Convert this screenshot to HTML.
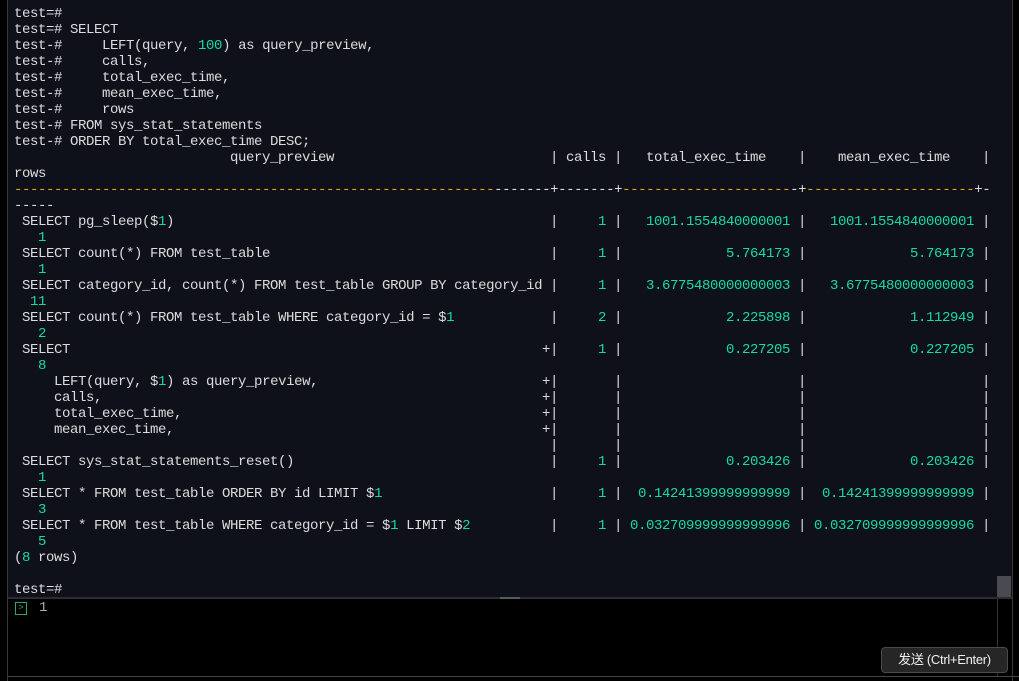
<!DOCTYPE html>
<html><head><meta charset="utf-8">
<style>
html,body{margin:0;padding:0;background:#000;width:1019px;height:681px;overflow:hidden}
#term{position:absolute;left:8px;top:0;width:1004px;height:597px;background:#0e111a}
#lb{position:absolute;left:7px;top:0;width:1px;height:681px;background:#3a3a3a}
#rb{position:absolute;left:1012px;top:0;width:1px;height:681px;background:#3a3a3a}
.l{position:absolute;left:0;height:16px;line-height:16px;font-family:"Liberation Mono",monospace;font-size:14px;letter-spacing:-0.4px;color:#dcdcdc;white-space:pre;width:1000px}
.l span{position:absolute;top:0}
.q{left:22px}
.g{color:#1ad9a3}
.p1{left:550px}.p2{left:614px}.p3{left:798px}.p4{left:982px}
.pl{left:542px}
.ca{left:566px;width:40px;text-align:right;color:#1ad9a3}
.ta{left:630px;width:160px;text-align:right;color:#1ad9a3}
.ma{left:814px;width:160px;text-align:right;color:#1ad9a3}
.o{color:#e8a317}
</style></head><body>
<div id="term"></div>
<div id="lb"></div><div id="rb"></div>
<div style="position:absolute;left:997px;top:576px;width:14px;height:21px;background:#4a4b52"></div>
<div style="position:absolute;left:8px;top:597px;width:1004px;height:2px;background:#2a2d33"></div>
<div style="position:absolute;left:500px;top:597px;width:20px;height:2px;background:#5a5a5a"></div>
<div style="position:absolute;left:997px;top:599px;width:1px;height:77px;background:#333"></div>
<div style="position:absolute;left:8px;top:676px;width:1011px;height:1px;background:#444"></div>
<div style="position:absolute;left:15px;top:602px;width:10px;height:11px;border:1px solid #2ea36b;color:#2ea36b;font:9px 'Liberation Mono',monospace;line-height:11px;text-align:center">&gt;</div>
<div style="position:absolute;left:39px;top:600px;height:16px;line-height:16px;font:14px 'Liberation Mono',monospace;color:#aaa">1</div>
<div style="position:absolute;left:881px;top:647px;width:125px;height:24px;background:#262626;border:1px solid #4a4a4a;border-radius:4px;color:#f0f0f0;font:13px 'Liberation Sans','Noto Sans CJK SC',sans-serif;letter-spacing:-0.3px;line-height:24px;text-align:center">发送 (Ctrl+Enter)</div>

<div style="position:absolute;left:6px;top:2px">
<div class="l" style="top:4px"><span style="left:8px">test=#</span></div>
<div class="l" style="top:20px"><span style="left:8px">test=# SELECT</span></div>
<div class="l" style="top:36px"><span style="left:8px">test-#     LEFT(query, <span class="g" style="position:static">100</span>) as query_preview,</span></div>
<div class="l" style="top:52px"><span style="left:8px">test-#     calls,</span></div>
<div class="l" style="top:68px"><span style="left:8px">test-#     total_exec_time,</span></div>
<div class="l" style="top:84px"><span style="left:8px">test-#     mean_exec_time,</span></div>
<div class="l" style="top:100px"><span style="left:8px">test-#     rows</span></div>
<div class="l" style="top:116px"><span style="left:8px">test-# FROM sys_stat_statements</span></div>
<div class="l" style="top:132px"><span style="left:8px">test-# ORDER BY total_exec_time DESC;</span></div>
</div>

<div style="position:absolute;left:0;top:2px">
<div class="l" style="top:148px"><span style="left:230px">query_preview</span><span class="p1">|</span><span style="left:566px">calls</span><span class="p2">|</span><span style="left:646px">total_exec_time</span><span class="p3">|</span><span style="left:838px">mean_exec_time</span><span class="p4">|</span></div>
<div class="l" style="top:164px"><span style="left:14px">rows</span></div>
<div class="l" style="top:180px"><span style="left:14px"><span class="o" style="position:static">------------------------------------------------------------</span>-------+-------+<span class="o" style="position:static">---------------------</span>-+<span class="o" style="position:static">---------------------</span>+-</span></div>
<div class="l" style="top:196px"><span style="left:14px">-----</span></div>

<div class="l" style="top:212px"><span class="q">SELECT pg_sleep($<span class="g" style="position:static">1</span>)</span><span class="p1">|</span><span class="ca">1</span><span class="p2">|</span><span class="ta">1001.1554840000001</span><span class="p3">|</span><span class="ma">1001.1554840000001</span><span class="p4">|</span></div>
<div class="l" style="top:228px"><span class="g" style="left:38px">1</span></div>

<div class="l" style="top:244px"><span class="q">SELECT count(*) FROM test_table</span><span class="p1">|</span><span class="ca">1</span><span class="p2">|</span><span class="ta">5.764173</span><span class="p3">|</span><span class="ma">5.764173</span><span class="p4">|</span></div>
<div class="l" style="top:260px"><span class="g" style="left:38px">1</span></div>

<div class="l" style="top:276px"><span class="q">SELECT category_id, count(*) FROM test_table GROUP BY category_id</span><span class="p1">|</span><span class="ca">1</span><span class="p2">|</span><span class="ta">3.6775480000000003</span><span class="p3">|</span><span class="ma">3.6775480000000003</span><span class="p4">|</span></div>
<div class="l" style="top:292px"><span class="g" style="left:30px">11</span></div>

<div class="l" style="top:308px"><span class="q">SELECT count(*) FROM test_table WHERE category_id = $<span class="g" style="position:static">1</span></span><span class="p1">|</span><span class="ca">2</span><span class="p2">|</span><span class="ta">2.225898</span><span class="p3">|</span><span class="ma">1.112949</span><span class="p4">|</span></div>
<div class="l" style="top:324px"><span class="g" style="left:38px">2</span></div>

<div class="l" style="top:340px"><span class="q">SELECT</span><span class="pl">+</span><span class="p1">|</span><span class="ca">1</span><span class="p2">|</span><span class="ta">0.227205</span><span class="p3">|</span><span class="ma">0.227205</span><span class="p4">|</span></div>
<div class="l" style="top:356px"><span class="g" style="left:38px">8</span></div>
<div class="l" style="top:372px"><span class="q">    LEFT(query, $<span class="g" style="position:static">1</span>) as query_preview,</span><span class="pl">+</span><span class="p1">|</span><span class="p2">|</span><span class="p3">|</span><span class="p4">|</span></div>
<div class="l" style="top:388px"><span class="q">    calls,</span><span class="pl">+</span><span class="p1">|</span><span class="p2">|</span><span class="p3">|</span><span class="p4">|</span></div>
<div class="l" style="top:404px"><span class="q">    total_exec_time,</span><span class="pl">+</span><span class="p1">|</span><span class="p2">|</span><span class="p3">|</span><span class="p4">|</span></div>
<div class="l" style="top:420px"><span class="q">    mean_exec_time,</span><span class="pl">+</span><span class="p1">|</span><span class="p2">|</span><span class="p3">|</span><span class="p4">|</span></div>
<div class="l" style="top:436px"><span class="p1">|</span><span class="p2">|</span><span class="p3">|</span><span class="p4">|</span></div>

<div class="l" style="top:452px"><span class="q">SELECT sys_stat_statements_reset()</span><span class="p1">|</span><span class="ca">1</span><span class="p2">|</span><span class="ta">0.203426</span><span class="p3">|</span><span class="ma">0.203426</span><span class="p4">|</span></div>
<div class="l" style="top:468px"><span class="g" style="left:38px">1</span></div>

<div class="l" style="top:484px"><span class="q">SELECT * FROM test_table ORDER BY id LIMIT $<span class="g" style="position:static">1</span></span><span class="p1">|</span><span class="ca">1</span><span class="p2">|</span><span class="ta">0.14241399999999999</span><span class="p3">|</span><span class="ma">0.14241399999999999</span><span class="p4">|</span></div>
<div class="l" style="top:500px"><span class="g" style="left:38px">3</span></div>

<div class="l" style="top:516px"><span class="q">SELECT * FROM test_table WHERE category_id = $<span class="g" style="position:static">1</span> LIMIT $<span class="g" style="position:static">2</span></span><span class="p1">|</span><span class="ca">1</span><span class="p2">|</span><span class="ta">0.032709999999999996</span><span class="p3">|</span><span class="ma">0.032709999999999996</span><span class="p4">|</span></div>
<div class="l" style="top:532px"><span class="g" style="left:38px">5</span></div>

<div class="l" style="top:548px"><span style="left:14px">(<span class="g" style="position:static">8</span> rows)</span></div>
<div class="l" style="top:580px"><span style="left:14px">test=#</span></div>
</div>
</body></html>
